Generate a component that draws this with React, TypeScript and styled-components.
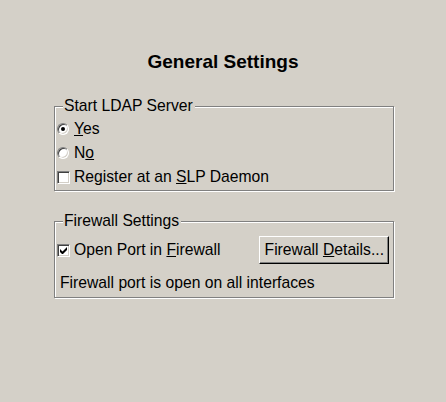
import styled, { createGlobalStyle } from 'styled-components';

const GlobalStyle = createGlobalStyle`
  html, body {
    margin: 0;
    padding: 0;
    background: #d4d0c8;
  }
  body {
    font-family: "Liberation Sans", Arial, sans-serif;
    color: #000;
  }
`;

const Page = styled.div`
  width: 446px;
  min-height: 402px;
  box-sizing: border-box;
  padding-top: 51px;
  background: #d4d0c8;
`;

const Title = styled.h1`
  margin: 0;
  font-size: 19px;
  line-height: 22px;
  font-weight: bold;
  text-align: center;
`;

const Group = styled.fieldset<{ $top: number; $bottom: number }>`
  box-sizing: border-box;
  width: 340px;
  margin: ${p => p.$top}px 0 0 54px;
  padding: 2px 4px ${p => p.$bottom}px 1px;
  border: 1px solid #808080;
  box-shadow: 1px 1px 0 #fff, inset 1px 1px 0 #fff;
  min-inline-size: 0;
`;

const Legend = styled.legend`
  margin-left: 7px;
  padding: 0 2px 0 1px;
  font-size: 15.7px;
  line-height: 18px;
  background: #d4d0c8;
`;

const OptionRow = styled.label`
  display: flex;
  align-items: center;
  height: 24px;
  font-size: 15.7px;
  gap: 4px;
`;

const Radio = styled.span<{ $checked?: boolean }>`
  position: relative;
  width: 12px;
  height: 12px;
  box-sizing: border-box;
  border-radius: 50%;
  border: 1px solid;
  border-color: #808080 #fff #fff #808080;
  box-shadow: inset 1px 1px 0 #404040, inset -1px -1px 0 #d4d0c8;
  background: #fff;
  margin: 0 1px 0 1px;
  &::after {
    content: '';
    display: ${p => (p.$checked ? 'block' : 'none')};
    position: absolute;
    left: 3px;
    top: 3px;
    width: 4px;
    height: 4px;
    border-radius: 50%;
    background: #000;
  }
`;

const Check = styled.span`
  display: flex;
  align-items: center;
  justify-content: center;
  width: 13px;
  height: 13px;
  box-sizing: border-box;
  border: 1px solid;
  border-color: #808080 #fff #fff #808080;
  box-shadow: inset 1px 1px 0 #404040, inset -1px -1px 0 #d4d0c8;
  background: #fff;
  margin-left: 1px;
`;

const FirewallRow = styled.div`
  display: flex;
  align-items: center;
  justify-content: space-between;
  height: 28px;
  margin-top: 4px;
`;

const Button = styled.button`
  height: 28px;
  padding: 0 4px 0 5px;
  font-family: "Liberation Sans", Arial, sans-serif;
  font-size: 15.7px;
  color: #000;
  background: #d4d0c8;
  border: 1px solid;
  border-color: #fff #000 #000 #fff;
  box-shadow: inset -1px -1px 0 #808080;
  border-radius: 0;
`;

const Note = styled.div`
  height: 24px;
  line-height: 24px;
  margin-top: 7px;
  padding-left: 4px;
  font-size: 15.7px;
`;

function CheckMark() {
  return (
    <svg width="7" height="7" viewBox="0 0 7 7">
      <path d="M0 2v3l2 2h1l4-4V0L2.5 4.5z" fill="#000" />
    </svg>
  );
}

function App() {
  return (
    <Page>
      <GlobalStyle />
      <Title>General Settings</Title>
      <Group $top={24} $bottom={1}>
        <Legend>Start LDAP Server</Legend>
        <OptionRow>
          <Radio $checked />
          <span><u>Y</u>es</span>
        </OptionRow>
        <OptionRow>
          <Radio />
          <span>N<u>o</u></span>
        </OptionRow>
        <OptionRow>
          <Check />
          <span>Register at an <u>S</u>LP Daemon</span>
        </OptionRow>
      </Group>
      <Group $top={21} $bottom={2}>
        <Legend>Firewall Settings</Legend>
        <FirewallRow>
          <OptionRow>
            <Check><CheckMark /></Check>
            <span>Open Port in <u>F</u>irewall</span>
          </OptionRow>
          <Button>Firewall <u>D</u>etails...</Button>
        </FirewallRow>
        <Note>Firewall port is open on all interfaces</Note>
      </Group>
    </Page>
  );
}

export default App;
